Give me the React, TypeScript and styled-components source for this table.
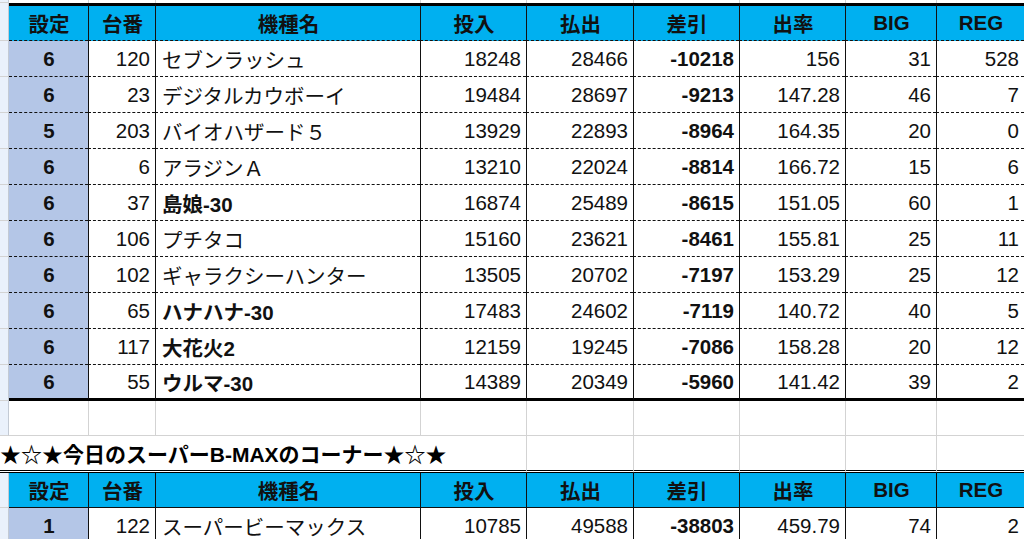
import React from "react";
import styled, { createGlobalStyle, css } from "styled-components";

const GlobalStyle = createGlobalStyle`
  html, body {
    margin: 0;
    padding: 0;
    background: #fff;
    overflow: hidden;
  }
  body {
    font-family: "Liberation Sans", "Noto Sans CJK JP", sans-serif;
    color: #111;
  }
`;

const COLUMNS = "9px 79px 67px 265px 106px 107px 106px 106px 91px 88px";
const GRID = "#d3d3d3";

type Line = "dashed" | "thick" | "grid" | "solid" | "double" | "none";
type VLine = "black" | "grid" | "none";

const lineCss = (line: Line) => {
  switch (line) {
    case "dashed":
      return "1px dashed #111";
    case "thick":
      return "3px solid #000";
    case "grid":
      return `1px solid ${GRID}`;
    case "solid":
      return "1px solid #111";
    case "double":
      return "3px double #000";
    default:
      return "none";
  }
};

const Sheet = styled.div`
  width: 1024px;
  height: 539px;
  overflow: hidden;
`;

const Row = styled.div<{ $h: number }>`
  display: grid;
  grid-template-columns: ${COLUMNS};
  height: ${(p) => p.$h}px;
`;

const Cell = styled.div<{
  $top?: Line;
  $bottom?: Line;
  $left?: VLine;
  $bg?: string;
  $align?: "left" | "center" | "right";
  $bold?: boolean;
  $span?: number;
}>`
  box-sizing: border-box;
  display: flex;
  align-items: center;
  justify-content: ${(p) =>
    p.$align === "center" ? "center" : p.$align === "left" ? "flex-start" : "flex-end"};
  padding: 0 5px 0 6px;
  font-size: 20.5px;
  font-weight: ${(p) => (p.$bold ? 700 : 400)};
  white-space: nowrap;
  overflow: visible;
  background: ${(p) => p.$bg || "transparent"};
  border-top: ${(p) => lineCss(p.$top || "none")};
  border-bottom: ${(p) => lineCss(p.$bottom || "none")};
  border-left: ${(p) =>
    p.$left === "black" ? "1px solid #111" : p.$left === "grid" ? `1px solid ${GRID}` : "none"};
  ${(p) =>
    p.$span &&
    css`
      grid-column: span ${p.$span};
    `}
`;

const Strip = styled.div`
  box-sizing: border-box;
  background: #eaf1fb;
  border-right: 1px solid #c3cad4;
  border-bottom: 1px solid ${GRID};
`;

const Title = styled(Cell)`
  padding: 0;
  font-size: 21px;
  font-weight: 700;
  color: #000;
`;

const HEADERS = ["設定", "台番", "機種名", "投入", "払出", "差引", "出率", "BIG", "REG"];
const HEADER_BG = "#00b0f0";
const SETTING_BG = "#b4c6e7";

type Machine = {
  setting: number;
  no: number;
  name: string;
  input: number;
  payout: number;
  diff: number;
  rate: string;
  big: number;
  reg: number;
  bold?: boolean;
};

const ranking: Machine[] = [
  { setting: 6, no: 120, name: "セブンラッシュ", input: 18248, payout: 28466, diff: -10218, rate: "156", big: 31, reg: 528 },
  { setting: 6, no: 23, name: "デジタルカウボーイ", input: 19484, payout: 28697, diff: -9213, rate: "147.28", big: 46, reg: 7 },
  { setting: 5, no: 203, name: "バイオハザード５", input: 13929, payout: 22893, diff: -8964, rate: "164.35", big: 20, reg: 0 },
  { setting: 6, no: 6, name: "アラジンＡ", input: 13210, payout: 22024, diff: -8814, rate: "166.72", big: 15, reg: 6 },
  { setting: 6, no: 37, name: "島娘-30", input: 16874, payout: 25489, diff: -8615, rate: "151.05", big: 60, reg: 1, bold: true },
  { setting: 6, no: 106, name: "プチタコ", input: 15160, payout: 23621, diff: -8461, rate: "155.81", big: 25, reg: 11 },
  { setting: 6, no: 102, name: "ギャラクシーハンター", input: 13505, payout: 20702, diff: -7197, rate: "153.29", big: 25, reg: 12 },
  { setting: 6, no: 65, name: "ハナハナ-30", input: 17483, payout: 24602, diff: -7119, rate: "140.72", big: 40, reg: 5, bold: true },
  { setting: 6, no: 117, name: "大花火2", input: 12159, payout: 19245, diff: -7086, rate: "158.28", big: 20, reg: 12, bold: true },
  { setting: 6, no: 55, name: "ウルマ-30", input: 14389, payout: 20349, diff: -5960, rate: "141.42", big: 39, reg: 2, bold: true },
];

const bmax: Machine[] = [
  { setting: 1, no: 122, name: "スーパービーマックス", input: 10785, payout: 49588, diff: -38803, rate: "459.79", big: 74, reg: 2 },
];

function GridRow({ h, bottom = "grid" as Line }: { h: number; bottom?: Line }) {
  return (
    <Row $h={h}>
      <Strip />
      {HEADERS.map((_, i) => (
        <Cell key={i} $left={i === 0 ? "none" : "grid"} $bottom={bottom} />
      ))}
    </Row>
  );
}

function HeaderRow({ top, bottom, h }: { top: Line; bottom: Line; h: number }) {
  return (
    <Row $h={h}>
      <Strip />
      {HEADERS.map((label, i) => (
        <Cell
          key={label}
          $top={top}
          $bottom={bottom}
          $left={i === 0 ? "none" : "black"}
          $bg={HEADER_BG}
          $align="center"
          $bold
        >
          {label}
        </Cell>
      ))}
    </Row>
  );
}

function DataRow({ m, bottom, h }: { m: Machine; bottom: Line; h: number }) {
  return (
    <Row $h={h}>
      <Strip />
      <Cell $bottom={bottom} $bg={SETTING_BG} $align="center" $bold>
        {m.setting}
      </Cell>
      <Cell $bottom={bottom} $left="black">{m.no}</Cell>
      <Cell $bottom={bottom} $left="black" $align="left" $bold={m.bold}>
        {m.name}
      </Cell>
      <Cell $bottom={bottom} $left="black">{m.input}</Cell>
      <Cell $bottom={bottom} $left="black">{m.payout}</Cell>
      <Cell $bottom={bottom} $left="black" $bold>
        {m.diff}
      </Cell>
      <Cell $bottom={bottom} $left="black">{m.rate}</Cell>
      <Cell $bottom={bottom} $left="black">{m.big}</Cell>
      <Cell $bottom={bottom} $left="black">{m.reg}</Cell>
    </Row>
  );
}

export default function App() {
  return (
    <>
      <GlobalStyle />
      <Sheet>
        <GridRow h={3} bottom="none" />
        <HeaderRow top="thick" bottom="dashed" h={38} />
        {ranking.map((m, i) => (
          <DataRow
            key={m.no}
            m={m}
            bottom={i === ranking.length - 1 ? "thick" : "dashed"}
            h={36}
          />
        ))}
        <GridRow h={35} />
        <Row $h={37}>
          <Title $span={5} $align="left" $bottom="double">
            ★☆★今日のスーパーB-MAXのコーナー★☆★
          </Title>
          {HEADERS.slice(4).map((_, i) => (
            <Cell key={i} $left="grid" $bottom="double" />
          ))}
        </Row>
        <HeaderRow top="none" bottom="solid" h={35} />
        {bmax.map((m) => (
          <DataRow key={m.no} m={m} bottom="solid" h={36} />
        ))}
      </Sheet>
    </>
  );
}
